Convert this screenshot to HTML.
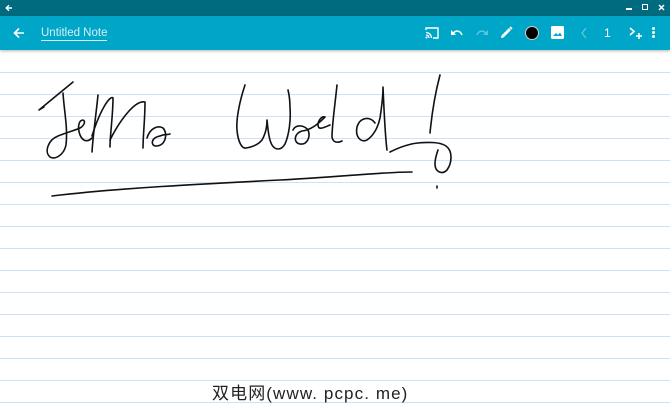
<!DOCTYPE html>
<html><head><meta charset="utf-8"><style>
*{margin:0;padding:0;box-sizing:border-box}
body{width:670px;height:419px;overflow:hidden;background:#fff;position:relative;font-family:"Liberation Sans",sans-serif}
.tb{position:absolute;left:0;top:0;width:670px;height:16px;background:#006b7f}
.bar{position:absolute;left:0;top:16px;width:670px;height:34px;background:#00a6c8;box-shadow:0 1px 3px rgba(0,0,0,.3)}
.title{position:absolute;left:41px;top:11px;font-size:11.5px;color:#d2f0f7;border-bottom:1.5px solid #d2f0f7;padding-bottom:1px;line-height:12px}
.line{position:absolute;left:0;width:670px;height:1px;background:#cfe1f8}
.wm{position:absolute;left:212px;top:384px;font-size:17px;color:#222;font-family:"Liberation Sans","Noto Sans CJK SC",sans-serif;line-height:20px;letter-spacing:1.1px}
</style></head><body>
<div class="line" style="top:72px"></div><div class="line" style="top:94px"></div><div class="line" style="top:116px"></div><div class="line" style="top:138px"></div><div class="line" style="top:160px"></div><div class="line" style="top:182px"></div><div class="line" style="top:204px"></div><div class="line" style="top:226px"></div><div class="line" style="top:248px"></div><div class="line" style="top:270px"></div><div class="line" style="top:292px"></div><div class="line" style="top:314px"></div><div class="line" style="top:336px"></div><div class="line" style="top:358px"></div><div class="line" style="top:380px"></div><div class="line" style="top:402px"></div>
<svg style="position:absolute;left:0;top:0" width="670" height="419">
<g fill="none" stroke="#111" stroke-width="1.6" stroke-linecap="round" stroke-linejoin="round">
<path d="M44,107 L39,110 L73,82"/>
<path d="M63,93 C64,110 68,128 66,145 C64,155 55,160 50,157 C44,152 48,140 58,136 C68,132 76,130 80,128 C84,126 86,121 83,120 C79,120 77,127 80,135 C83,142 88,142 92,138"/>
<path d="M98,95 C96,115 93,135 92,152"/>
<path d="M92,136 C100,110 110,95 113,98 C113,115 110,135 110,147"/>
<path d="M110,140 C120,120 135,100 145,102 C145,120 143,135 143,148"/>
<path d="M147,138 C150,128 158,125 163,128 C168,133 166,146 156,146 C151,146 150,138 160,136 C164,134 167,135 170,134"/>
<path d="M245,85 C240,100 236,118 237,130 C238,142 242,149 246,148 C252,147 258,145 262,140 C266,133 267,125 267,120 C268,130 269,140 272,145 C275,150 281,151 285,144 C289,135 291,120 290,108 C290,100 289,94 288,90"/>
<path d="M293,130 C296,124 304,125 308,130 C311,137 307,145 300,144 C293,143 294,133 302,131 C312,130 320,122 325,117 C322,116 318,120 318,125 C318,131 325,127 330,125"/>
<path d="M337,85 C335,105 332,125 332,137 C333,143 338,143 342,141"/>
<path d="M375,123 C370,116 360,117 357,127 C355,137 361,143 367,140 C373,136 378,128 380,118 C382,105 383,95 383,87 C384,110 385,135 387,150"/>
<path d="M390,152 C398,148 408,144 418,143 C430,142 440,142 446,146 C453,151 452,163 447,170 C442,175 435,172 435,164 C435,158 437,153 438,150"/>
<path d="M440,75 C436,90 432,112 430,133"/>
<path d="M437,186 L437,188"/>
<path d="M52,196 C120,188 200,184 280,180 C340,177 380,172 412,172"/>
</g></svg>
<div class="tb">
<svg style="position:absolute;left:5px;top:4px" width="8" height="8" viewBox="0 0 8 8"><path d="M7,4H1.5M4,1.2L1.2,4 4,6.8" stroke="#fff" stroke-width="1.4" fill="none"/></svg>
<div style="position:absolute;left:626px;top:8px;width:6px;height:1.5px;background:#fff"></div>
<div style="position:absolute;left:642px;top:4px;width:6px;height:6px;border:1.5px solid #fff"></div>
<svg style="position:absolute;left:658px;top:4px" width="7" height="7"><path d="M1,1L6,6M6,1L1,6" stroke="#fff" stroke-width="1.5"/></svg>
</div>
<div class="bar">
<svg style="position:absolute;left:13px;top:11px" width="12" height="12" viewBox="0 0 12 12"><path d="M11,6H2M6,1.5L1.5,6 6,10.5" stroke="#fff" stroke-width="1.6" fill="none"/></svg>
<div class="title">Untitled Note</div>
<svg style="position:absolute;left:425px;top:10px" width="14" height="14" viewBox="0 0 14 14"><path d="M1,4V2h12v10H8" stroke="#fff" stroke-width="1.4" fill="none"/><path d="M1,6.5a5.5,5.5 0 0 1 5.5,5.5M1,9a3,3 0 0 1 3,3" stroke="#fff" stroke-width="1.3" fill="none"/><circle cx="1.5" cy="11.5" r="1" fill="#fff"/></svg>
<svg style="position:absolute;left:450px;top:11px" width="14" height="12" viewBox="0 0 14 12"><path d="M3,7C5,3 10,3 12,8" stroke="#fff" stroke-width="1.6" fill="none"/><path d="M1,3V8H6Z" fill="#fff"/></svg>
<svg style="position:absolute;left:475px;top:11px" width="14" height="12" viewBox="0 0 14 12"><path d="M11,7C9,3 4,3 2,8" stroke="#5cc5dc" stroke-width="1.6" fill="none"/><path d="M13,3V8H8Z" fill="#5cc5dc"/></svg>
<svg style="position:absolute;left:500px;top:10px" width="13" height="13" viewBox="0 0 13 13"><path d="M1,12L1.5,9.5 9,2 11,4 3.5,11.5Z" fill="#fff"/><path d="M10,1L12,3" stroke="#fff" stroke-width="1.6"/></svg>
<div style="position:absolute;left:525px;top:10px;width:14px;height:14px;border-radius:50%;background:#000;border:1px solid #ccc"></div>
<svg style="position:absolute;left:551px;top:10px" width="13" height="13"><rect x="0" y="0" width="13" height="13" rx="1.5" fill="#fff"/><path d="M2,10L5,7 7,9 9,6.5 11,10Z" fill="#00a6c8"/></svg>
<svg style="position:absolute;left:580px;top:11px" width="8" height="12"><path d="M6,1L2,6 6,11" stroke="#5cc5dc" stroke-width="1.4" fill="none"/></svg>
<div style="position:absolute;left:604px;top:10px;font-size:12px;color:#fff;line-height:14px">1</div>
<svg style="position:absolute;left:629px;top:11px" width="14" height="14"><path d="M1,1L5,4.5 1,8" stroke="#fff" stroke-width="1.6" fill="none"/><path d="M10,6V12M7,9H13" stroke="#fff" stroke-width="1.5"/></svg>
<div style="position:absolute;left:652px;top:11px;width:3px;height:3px;background:#fff;border-radius:50%;box-shadow:0 4px 0 #fff,0 8px 0 #fff"></div>
</div>
<div class="wm">双电网(www. pcpc. me)</div>
</body></html>
